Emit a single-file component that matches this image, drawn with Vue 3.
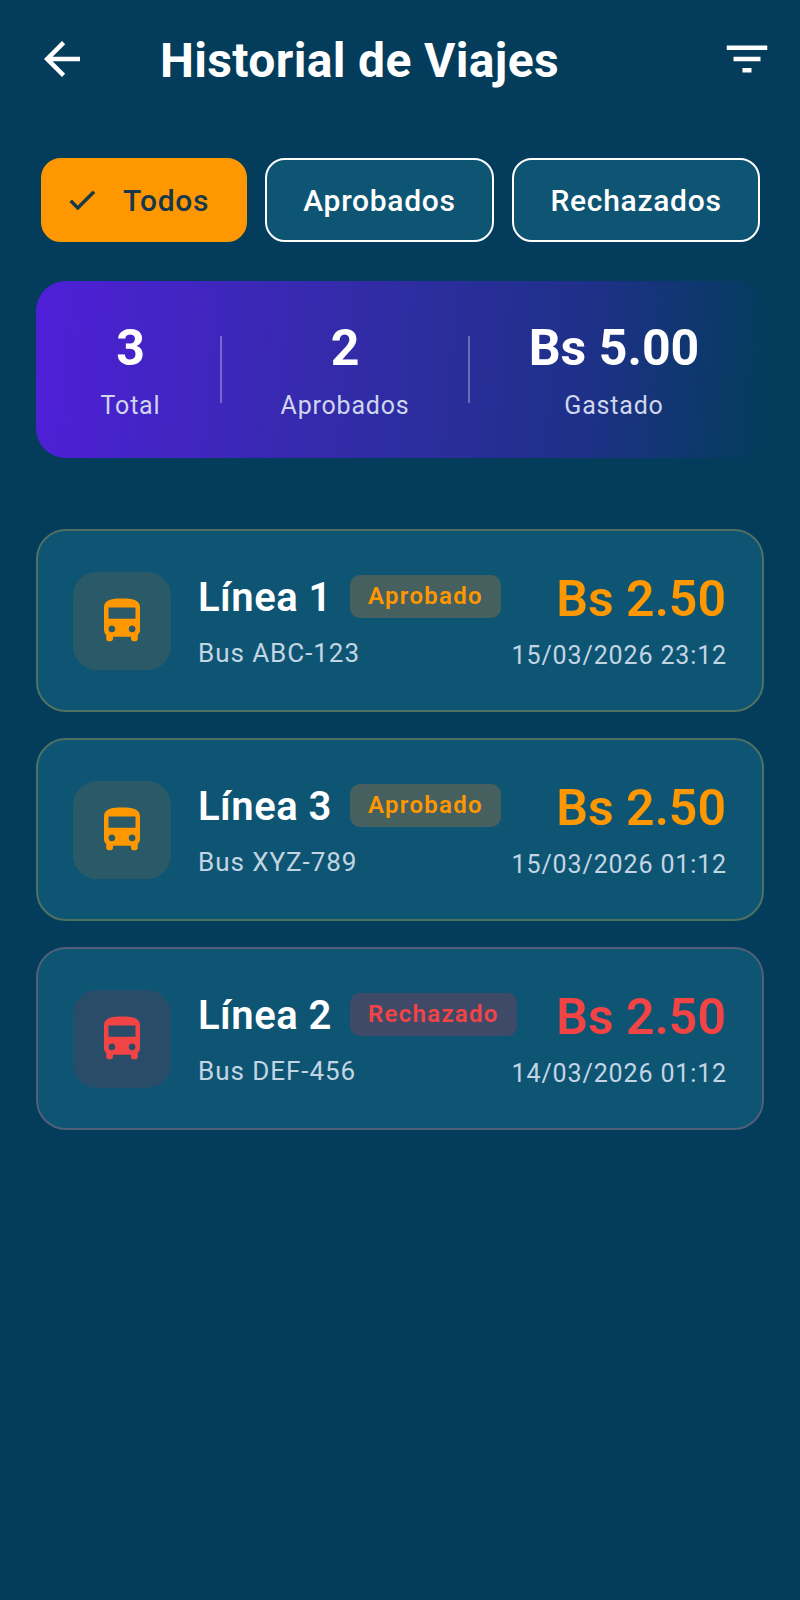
<template>
  <div class="page">
    <header class="topbar">
      <svg class="top-icon" viewBox="0 0 24 24"><path d="M20 11H7.83l5.59-5.59L12 4l-8 8 8 8 1.41-1.41L7.83 13H20v-2z" /></svg>
      <h1 class="title">Historial de Viajes</h1>
      <svg class="top-icon" viewBox="0 0 24 24"><path d="M10 18h4v-2h-4v2zM3 6v2h18V6H3zm3 7h12v-2H6v2z" /></svg>
    </header>

    <div class="chips">
      <button v-for="chip in chips" :key="chip.label" class="chip" :class="[chip.cls, { active: chip.active }]">
        <svg v-if="chip.active" class="check" viewBox="0 0 24 24"><path d="M9 16.17L4.83 12l-1.41 1.41L9 19 21 7l-1.41-1.41z" /></svg>
        {{ chip.label }}
      </button>
    </div>

    <section class="stats">
      <div class="stat stat-a">
        <div class="stat-value">3</div>
        <div class="stat-label">Total</div>
      </div>
      <div class="divider"></div>
      <div class="stat stat-b">
        <div class="stat-value">2</div>
        <div class="stat-label">Aprobados</div>
      </div>
      <div class="divider"></div>
      <div class="stat stat-c">
        <div class="stat-value">Bs 5.00</div>
        <div class="stat-label">Gastado</div>
      </div>
    </section>

    <ul class="trips">
      <li v-for="trip in trips" :key="trip.line" class="trip" :class="trip.rejected ? 'rejected' : 'approved'">
        <div class="bus-box">
          <svg class="bus" viewBox="0 0 24 24">
            <path d="M4 16c0 .88.39 1.67 1 2.22V20c0 .55.45 1 1 1h1c.55 0 1-.45 1-1v-1h8v1c0 .55.45 1 1 1h1c.55 0 1-.45 1-1v-1.78c.61-.55 1-1.34 1-2.22V6c0-3.5-3.58-4-8-4s-8 .5-8 4v10zm3.5 1c-.83 0-1.5-.67-1.5-1.5S6.67 14 7.5 14s1.5.67 1.5 1.5S8.33 17 7.5 17zm9 0c-.83 0-1.5-.67-1.5-1.5s.67-1.5 1.5-1.5 1.5.67 1.5 1.5-.67 1.5-1.5 1.5zm1.5-6H6V6h12v5z" />
          </svg>
        </div>
        <div class="trip-info">
          <div class="trip-head">
            <span class="line">{{ trip.line }}</span>
            <span class="badge">{{ trip.rejected ? "Rechazado" : "Aprobado" }}</span>
          </div>
          <div class="plate">{{ trip.bus }}</div>
        </div>
        <div class="trip-right">
          <div class="amount">{{ trip.amount }}</div>
          <div class="date">{{ trip.date }}</div>
        </div>
      </li>
    </ul>
  </div>
</template>

<script setup>
const chips = [
  { label: "Todos", cls: "chip-all", active: true },
  { label: "Aprobados", cls: "chip-ok", active: false },
  { label: "Rechazados", cls: "chip-no", active: false },
];

const trips = [
  { line: "Línea 1", bus: "Bus ABC-123", amount: "Bs 2.50", date: "15/03/2026 23:12", rejected: false },
  { line: "Línea 3", bus: "Bus XYZ-789", amount: "Bs 2.50", date: "15/03/2026 01:12", rejected: false },
  { line: "Línea 2", bus: "Bus DEF-456", amount: "Bs 2.50", date: "14/03/2026 01:12", rejected: true },
];
</script>

<style scoped>
.page {
  box-sizing: border-box;
  width: 800px;
  height: 1600px;
  overflow: hidden;
  background: #033d5b;
  font-family: Roboto, "Liberation Sans", sans-serif;
  color: #fff;
}

.topbar {
  display: flex;
  align-items: flex-start;
  padding: 32px 26px 0 35px;
}

.top-icon {
  width: 54px;
  height: 54px;
  fill: #fff;
  flex: none;
}

.title {
  flex: 1;
  margin: 0 0 0 71px;
  padding-top: 2px;
  font-size: 48px;
  font-weight: 700;
  letter-spacing: 0.35px;
  line-height: 54px;
}

.chips {
  display: flex;
  gap: 18px;
  margin: 70px 0 0 41px;
}

.chip {
  box-sizing: border-box;
  display: flex;
  align-items: center;
  justify-content: center;
  height: 84px;
  border: 2px solid #fff;
  border-radius: 20px;
  background: #0e5574;
  color: #fff;
  font-family: inherit;
  font-size: 30px;
  font-weight: 500;
  letter-spacing: 0.7px;
}

.chip-all { width: 206px; }
.chip-ok { width: 229px; }
.chip-no { width: 248px; }

.chip.active {
  border-color: #ff9800;
  background: #ff9800;
  color: #17384a;
  justify-content: flex-start;
  padding-left: 22px;
}

.check {
  width: 34px;
  height: 34px;
  fill: #17384a;
  stroke: #17384a;
  stroke-width: 0.6;
  margin-right: 24px;
}

.stats {
  display: flex;
  align-items: center;
  height: 177px;
  margin: 39px 35px 0 36px;
  padding: 0 0 0 5px;
  border-radius: 30px;
  background: linear-gradient(95deg, #4f1fd8 0%, #312ca6 45%, #1e3088 75%, #033d5b 100%);
}

.stat { text-align: center; }
.stat-a { width: 179px; }
.stat-b { width: 246px; }
.stat-c { width: 288px; }

.stat-value {
  font-size: 50px;
  font-weight: 700;
  line-height: 58px;
}

.stat-label {
  margin-top: 14px;
  font-size: 25px;
  font-weight: 450;
  letter-spacing: 0.8px;
  line-height: 30px;
  color: #d0d6ee;
}

.divider {
  width: 2px;
  height: 67px;
  background: rgba(255, 255, 255, 0.3);
}

.trips {
  list-style: none;
  margin: 71px 36px 0;
  padding: 0;
  display: flex;
  flex-direction: column;
  gap: 26px;
}

.trip {
  box-sizing: border-box;
  display: flex;
  align-items: center;
  height: 183px;
  padding: 0 35px;
  border: 2px solid;
  border-radius: 30px;
  background: #0e5574;
}

.approved { border-color: #4f7163; --accent: #ff9800; --soft: #2a5a68; --badge: #45605f; }
.rejected { border-color: #50607a; --accent: #f24444; --soft: #294d69; --badge: #3f4a69; }

.bus-box {
  display: flex;
  align-items: center;
  justify-content: center;
  flex: none;
  width: 98px;
  height: 98px;
  border-radius: 24px;
  background: var(--soft);
}

.bus {
  width: 54px;
  height: 54px;
  fill: var(--accent);
}

.trip-info {
  flex: 1;
  min-width: 0;
  margin-left: 27px;
  padding-top: 4px;
}

.trip-head {
  display: flex;
  align-items: center;
}

.line {
  font-size: 40px;
  font-weight: 600;
  letter-spacing: 0.5px;
  line-height: 44px;
  white-space: nowrap;
}

.badge {
  margin: -4px 0 0 18px;
  padding: 0 18px;
  height: 43px;
  line-height: 43px;
  border-radius: 10px;
  background: var(--badge);
  color: var(--accent);
  font-size: 24px;
  font-weight: 600;
  letter-spacing: 1.3px;
}

.plate {
  margin-top: 17px;
  font-size: 26px;
  line-height: 32px;
  letter-spacing: 0.95px;
  color: #c3d5e3;
}

.trip-right {
  text-align: right;
  flex: none;
  padding-top: 4px;
}

.amount {
  margin: -3px 1px 0 0;
  font-size: 50px;
  font-weight: 600;
  line-height: 56px;
  color: var(--accent);
}

.date {
  margin-top: 14px;
  font-size: 25px;
  line-height: 30px;
  letter-spacing: 0.87px;
  color: #c3d5e3;
}
</style>
